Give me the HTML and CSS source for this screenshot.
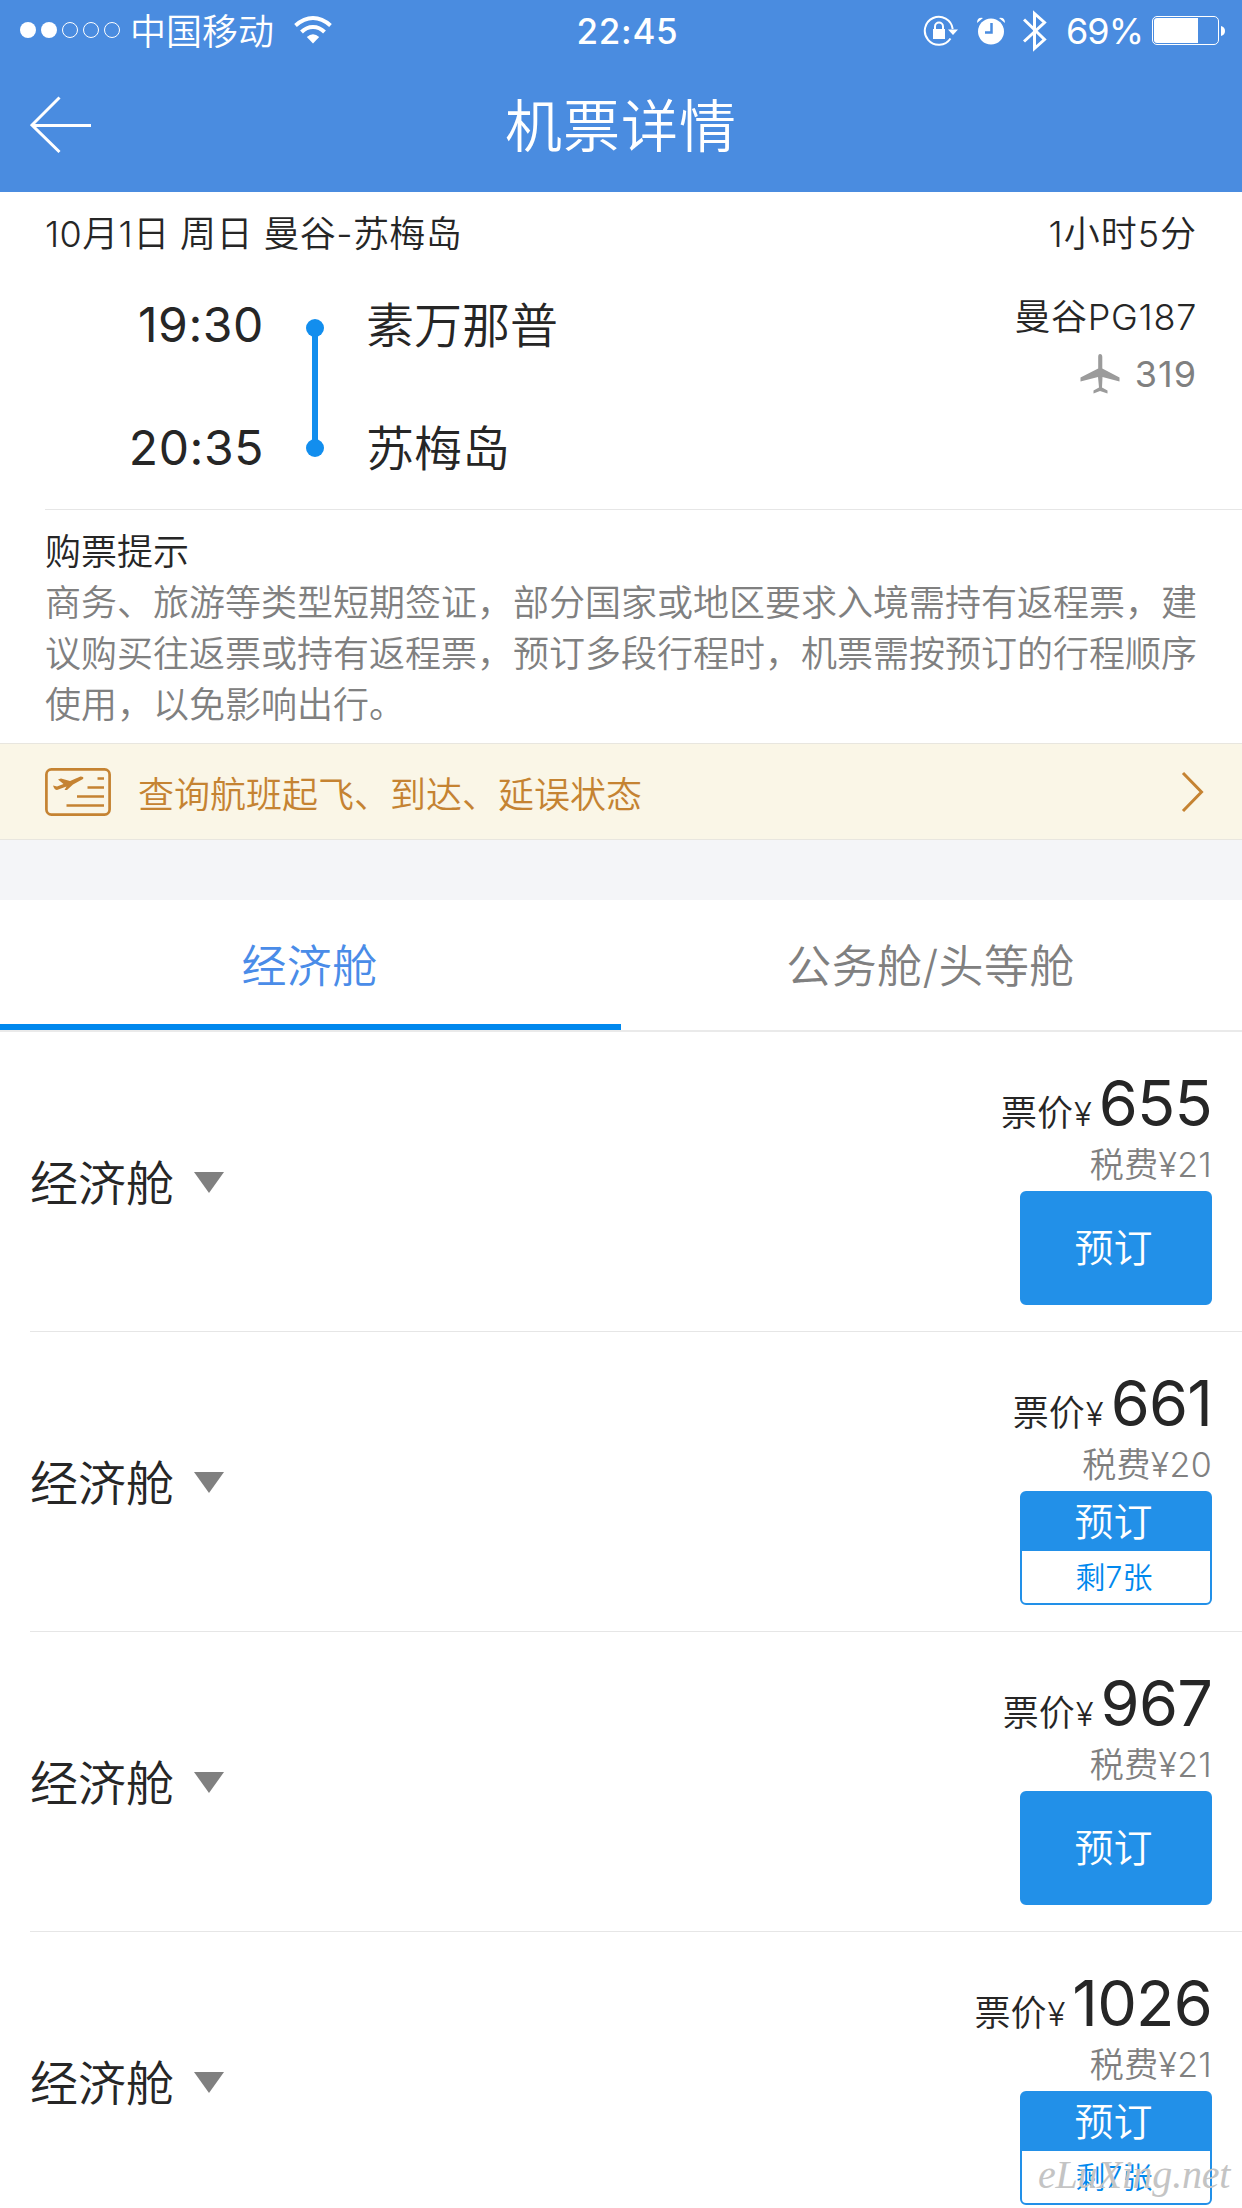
FILE: index.html
```html
<!DOCTYPE html>
<html lang="zh-CN">
<head>
<meta charset="utf-8">
<title>机票详情</title>
<link rel="stylesheet" href="styles.css">
</head>
<body>
<header class="header">
  <div class="status">
    <div class="status-left">
      <svg class="signal" width="102" height="18" viewBox="0 0 102 18" fill="#fff">
        <circle cx="9" cy="9" r="8"/><circle cx="30" cy="9" r="8"/>
        <g fill="none" stroke="#fff"><circle cx="51" cy="9" r="7.5"/><circle cx="72" cy="9" r="7.5"/><circle cx="93" cy="9" r="7.5"/></g>
      </svg>
      <span class="carrier">中国移动</span>
      <svg width="38" height="28" viewBox="0 0 38 28">
        <g fill="none" stroke="#fff" stroke-width="4"><path d="M1.5 9.5Q10 2 19 2T36.500 9.500"/><path d="M7.500 16Q12.500 11 19 11T30.500 16"/></g>
        <path d="M12.800 21Q19 15.500 25.200 21L19 27.500Z" fill="#fff"/>
      </svg>
    </div>
    <div class="clock">22:45</div>
    <div class="status-right">
      <svg class="lock" width="36" height="32" viewBox="0 0 36 32">
        <path d="M27.500 23.500A14 14 0 1 1 29.700 14" fill="none" stroke="#fff" stroke-width="2"/>
        <path d="M25 14.500H35L30 20Z" fill="#fff"/>
        <rect x="10" y="14" width="12" height="10" fill="#fff"/>
        <path d="M12 15V11.500a4 4 0 0 1 8 0V15" fill="none" stroke="#fff" stroke-width="2"/>
      </svg>
      <svg class="alarm" width="28" height="28" viewBox="0 0 28 28">
        <circle cx="14" cy="14.500" r="13" fill="#fff"/>
        <path d="M0 6Q0 0 6 1ZM28 6Q28 0 22 1Z" fill="#fff"/>
        <path d="M14.500 6V15.500H8" fill="none" stroke="#4a8ce0" stroke-width="2.500"/>
      </svg>
      <svg class="bluetooth" width="24" height="42" viewBox="0 0 24 42">
        <path d="M1 9.500 21.500 29.500 11.500 38.500V3.500L21.500 12.500 1 31.500" fill="none" stroke="#fff" stroke-width="3"/>
      </svg>
      <span class="percent">69%</span>
      <svg width="74" height="30" viewBox="0 0 74 30">
        <rect x=".5" y=".5" width="66" height="28" rx="4.500" fill="none" stroke="#fff"/>
        <path d="M5 2H46V27H5Q2 27 2 24V5Q2 2 5 2Z" fill="#fff"/>
        <path d="M69 10Q73 11 73 15T69 20Z" fill="#fff"/>
      </svg>
    </div>
  </div>
  <div class="nav">
    <svg class="back" width="62" height="58" viewBox="0 0 62 58" fill="none" stroke="#fff" stroke-width="3"><path d="M29.500 1.500 2 29 29.500 56M2 29.500H61"/></svg>
    <h1 class="title">机票详情</h1>
  </div>
</header>

<section class="flight">
  <div class="summary"><span>10月1日 周日 曼谷-苏梅岛</span><span class="duration">1小时5分</span></div>
  <div class="route">
    <div class="times"><span>19:30</span><span>20:35</span></div>
    <svg class="track" width="18" height="140" viewBox="0 0 18 140" fill="#128eee"><circle cx="9" cy="10" r="9"/><circle cx="9" cy="130" r="9"/><rect x="6" y="10" width="6" height="120"/></svg>
    <div class="airports"><span>素万那普</span><span>苏梅岛</span></div>
    <div class="carrier-info">
      <div>曼谷PG187</div>
      <div class="plane">
        <svg width="40" height="40" viewBox="0 0 40 40" fill="#9b9b9b"><path d="M20 0C21.500 0 22.300 1 22.300 3V14.500L39.500 23.500V27.500L22.500 23 22 33.500 27.500 36.500V39.500L20 37 13.500 39.500V36.500L19 33.500 18 23 .5 27.500V23.500L18.200 14.500V3C18.200 1 18.800 0 20 0Z"/></svg>
        <span>319</span>
      </div>
    </div>
  </div>
</section>

<section class="tips">
  <h2>购票提示</h2>
  <p>商务、旅游等类型短期签证，部分国家或地区要求入境需持有返程票，建<br>议购买往返票或持有返程票，预订多段行程时，机票需按预订的行程顺序<br>使用，以免影响出行。</p>
</section>

<a class="query">
  <svg width="66" height="48" viewBox="0 0 66 48" fill="none" stroke="#c58332" stroke-width="2.700">
    <rect x="1.400" y="1.400" width="63.200" height="45.200" rx="5"/>
    <path d="M52.500 10.500H59M42.500 19.500H59M32 28.500H59M21.500 37.500H59"/>
    <path d="M8 17.500 12 18.500 18.500 16 13 11.500 16 10.500 25 13 35.500 8.500Q39.500 8.500 38 11L28 16.500 22 22 19.500 22 21.500 18.500 12 22Q9.500 22 8 17.500Z" fill="#c58332" stroke="none"/>
  </svg>
  <span>查询航班起飞、到达、延误状态</span>
  <svg class="chevron" width="24" height="42" viewBox="0 0 24 42" fill="none" stroke="#c58332" stroke-width="3"><path d="M2 2 20.500 21 2 40"/></svg>
</a>

<nav class="tabs">
  <a class="tab tab-active">经济舱</a>
  <a class="tab">公务舱/头等舱</a>
</nav>

<main class="fares">
  <article class="fare">
    <div class="cabin">经济舱<i class="caret"></i></div>
    <div class="offer">
      <div class="price">票价<small>¥</small><b>655</b></div>
      <div class="tax">税费¥21</div>
      <div class="book"><span>预订</span></div>
    </div>
  </article>
  <article class="fare">
    <div class="cabin">经济舱<i class="caret"></i></div>
    <div class="offer">
      <div class="price">票价<small>¥</small><b>661</b></div>
      <div class="tax">税费¥20</div>
      <div class="book"><span>预订</span><em>剩7张</em></div>
    </div>
  </article>
  <article class="fare">
    <div class="cabin">经济舱<i class="caret"></i></div>
    <div class="offer">
      <div class="price">票价<small>¥</small><b>967</b></div>
      <div class="tax">税费¥21</div>
      <div class="book"><span>预订</span></div>
    </div>
  </article>
  <article class="fare">
    <div class="cabin">经济舱<i class="caret"></i></div>
    <div class="offer">
      <div class="price">票价<small>¥</small><b>1026</b></div>
      <div class="tax">税费¥21</div>
      <div class="book"><span>预订</span><em>剩7张</em></div>
    </div>
  </article>
</main>
<div class="watermark">eLuXing.net</div>
</body>
</html>
```

FILE: styles.css
```css
* { box-sizing: border-box; }
body {
  margin: 0;
  width: 1242px;
  height: 2208px;
  overflow: hidden;
  position: relative;
  background: #fff;
  color: #262626;
  font: 350 36px/50px Inter, "Noto Sans CJK SC", sans-serif;
}
svg { display: block; flex: none; }
h1, h2, p { margin: 0; font-weight: inherit; font-size: inherit; }

.header { height: 192px; background: #4a8ce0; color: #fff; }
.status { display: grid; grid-template-columns: 1fr auto 1fr; height: 62px; padding: 0 16px 0 19px; }
.status-left, .status-right { display: flex; align-items: center; height: 62px; }
.status-left { gap: 10px; }
.status-left svg { margin-bottom: 2px; }
.signal + .carrier { margin: 2px 10px 0 -1px; }
.status-right { justify-content: flex-end; }
.clock { font-size: 35px; font-weight: 550; line-height: 63px; letter-spacing: 0.7px; padding-left: 10px; }
.lock { margin-right: 18px; }
.alarm { margin-right: 18px; }
.bluetooth { margin-right: 19px; }
.percent { font-weight: 370; margin: 0 9px 0 0; letter-spacing: -1px; }
.nav { display: grid; grid-template-columns: 90px 1fr 90px; height: 130px; }
.back { margin: 34px 0 0 30px; }
.title { font-size: 57px; line-height: 130px; letter-spacing: 1px; text-align: center; }

.flight { height: 317px; padding: 17px 45px 0; }
.summary { display: flex; justify-content: space-between; letter-spacing: 0.4px; }
.duration { letter-spacing: 1px; }
.route { display: flex; font-size: 48px; line-height: 70px; margin-top: 31px; }
.times { display: flex; flex-direction: column; gap: 53px; width: 219px; text-align: right; font-weight: 370; letter-spacing: 0.6px; }
.track { margin: 28px 0 0 42px; }
.airports { display: flex; flex-direction: column; gap: 53px; margin-left: 42px; padding-top: 1px; }
.carrier-info { margin-left: auto; padding-top: 2px; font-size: 36px; line-height: 50px; text-align: right; letter-spacing: 0.7px; }
.plane { display: flex; justify-content: flex-end; align-items: center; gap: 15px; margin-top: 7px; color: #808080; font-weight: 370; letter-spacing: 1px; }

.tips { height: 234px; margin-left: 45px; padding-top: 17px; border-top: 1px solid #e6e6e6; }
.tips p { color: #808080; line-height: 51px; padding-top: 1px; }

.query { display: flex; align-items: center; height: 97px; padding: 0 37px 0 45px; border-top: 1px solid #e8e6df; border-bottom: 1px solid #e8e6df; background: #faf6e7; color: #c58332; }
.query span { margin: 6px 0 0 27px; }
.chevron { margin-left: auto; }

.tabs { display: flex; border-top: 60px solid #f4f5f8; border-bottom: 2px solid #eaeaea; height: 192px; }
.tab { flex: 1; height: 130px; padding: 2px 2px 0 0; color: #808080; font-size: 45px; line-height: 130px; letter-spacing: 0.4px; text-align: center; }
.tab-active { color: #4a8ce8; border-bottom: 6px solid #0088ee; }

.fare { display: flex; justify-content: space-between; height: 300px; margin-left: 30px; padding-right: 30px; border-bottom: 1px solid #e6e6e6; }
.fare:last-child { border-bottom: 0; }
.cabin { display: flex; align-items: center; gap: 20px; font-size: 48px; height: 304px; }
.caret { border: 15px solid transparent; border-top: 21px solid #808080; border-bottom: 0; margin-top: -4px; }
.offer { text-align: right; }
.price { height: 76px; padding-top: 36px; line-height: 70px; white-space: nowrap; }
.price small { font-size: 33px; margin-left: 1px; }
.price b { font-size: 63px; font-weight: 370; margin-left: 7px; letter-spacing: -0.8px; }
.tax { height: 50px; margin-top: 32px; font-size: 34px; color: #808080; line-height: 50px; letter-spacing: 0.3px; }
.book { display: flex; flex-direction: column; width: 192px; height: 114px; margin: 1px 0 0 auto; border: 2px solid #2290e8; border-radius: 6px; background: #2290e8; color: #fff; font-size: 39px; text-align: center; overflow: hidden; }
.book span { flex: 1; display: flex; align-items: center; justify-content: center; line-height: 58px; padding-right: 5px; }
.book em { height: 52px; background: #fff; color: #0088ee; font-size: 30px; font-style: normal; line-height: 53px; padding-right: 4px; }

.watermark { position: absolute; left: 1038px; top: 2150px; color: #c4c4c4; font: italic 400 40px/50px "Liberation Serif", serif; letter-spacing: -0.2px; }
```
